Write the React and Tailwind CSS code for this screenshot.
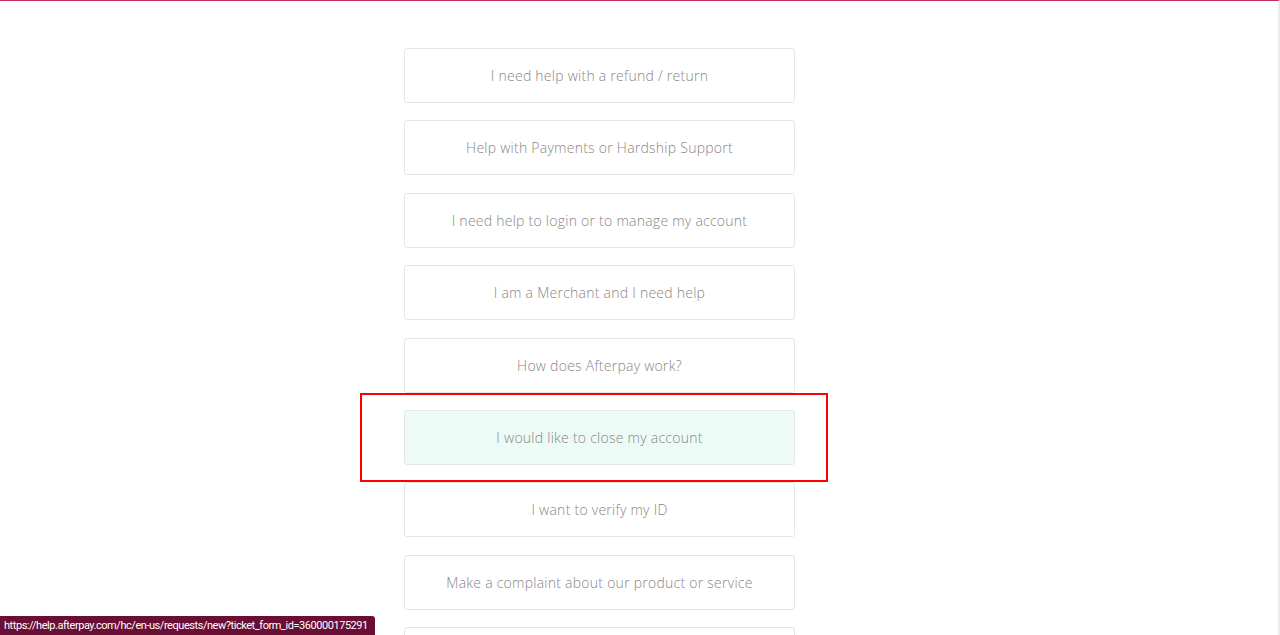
import React from "react";

const options = [
  "I need help with a refund / return",
  "Help with Payments or Hardship Support",
  "I need help to login or to manage my account",
  "I am a Merchant and I need help",
  "How does Afterpay work?",
  "I would like to close my account",
  "I want to verify my ID",
  "Make a complaint about our product or service",
  "",
];

export default function App() {
  const active = 5;

  return (
    <div className="relative h-screen w-full overflow-hidden bg-white border-t border-[#c02f68] border-r-2 border-r-[#ececec]">
      {/* Options */}
      <div className="flex flex-col items-start gap-[17.4px] pt-[47px] pl-[404px]">
        {options.map((label, i) => (
          <div key={i} className="relative">
            <button
              className={`w-[391px] h-[55px] rounded-[3px] border border-[#e6e6e6] text-[14px] font-light tracking-[0.25px] text-[#8b8686] ${
                i === active ? "bg-[#ecfbf5]" : "bg-white"
              }`}
              style={{ fontFamily: "'Open Sans', 'Liberation Sans', sans-serif" }}
            >
              {label}
            </button>
            {i === active && (
              <div className="pointer-events-none absolute -left-[44px] -top-[17px] w-[468px] h-[89px] border-2 border-[#f00]" />
            )}
          </div>
        ))}
      </div>

      {/* Link preview */}
      <div
        className="absolute left-0 bottom-0 h-[19px] pl-[4px] pr-[7px] bg-[#6a0e35] text-white text-[11px] tracking-[-0.45px] leading-[19px] rounded-tr-[3px]"
        style={{ fontFamily: "Roboto, 'Liberation Sans', sans-serif" }}
      >
        https://help.afterpay.com/hc/en-us/requests/new?ticket_form_id=360000175291
      </div>
    </div>
  );
}
